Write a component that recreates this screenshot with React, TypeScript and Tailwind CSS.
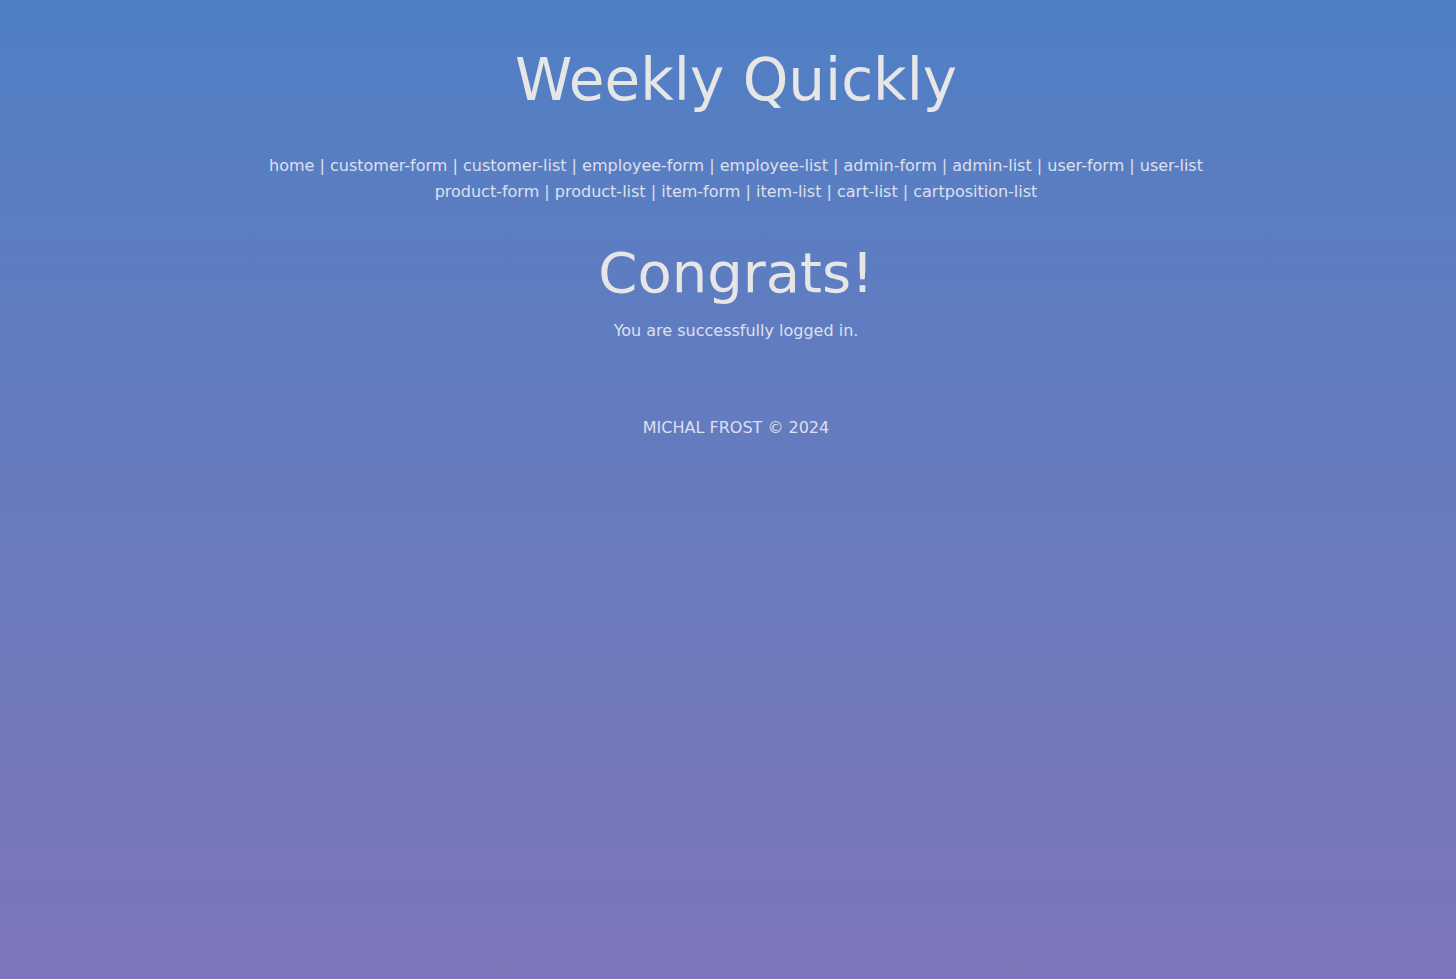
import React from "react";

const line1 = [
  "home",
  "customer-form",
  "customer-list",
  "employee-form",
  "employee-list",
  "admin-form",
  "admin-list",
  "user-form",
  "user-list",
];
const line2 = [
  "product-form",
  "product-list",
  "item-form",
  "item-list",
  "cart-list",
  "cartposition-list",
];

function NavLine({ items }: { items: string[] }) {
  return (
    <div className="whitespace-nowrap">
      {items.map((l, i) => (
        <React.Fragment key={l}>
          {i > 0 && " | "}
          <a href="#" className="text-[#dde0ee]">
            {l}
          </a>
        </React.Fragment>
      ))}
    </div>
  );
}

export default function App() {
  return (
    <div
      className="min-h-[979px] w-full bg-gradient-to-b from-[#4f7fc4] to-[#7c76b9] text-[#e6e6e6] flex flex-col items-center pl-[16px]"
      style={{ fontFamily: '"DejaVu Sans", sans-serif' }}
    >
      <h1 className="mt-[44px] text-[58px] leading-[72px] font-normal">
        Weekly Quickly
      </h1>
      <nav className="mt-[37px] flex flex-col items-center text-[16px] leading-[26px] text-[#dde0ee]">
        <NavLine items={line1} />
        <NavLine items={line2} />
      </nav>
      <h2 className="mt-[36px] text-[56px] leading-[64px] font-normal">Congrats!</h2>
      <p className="mt-[14px] text-[16px] leading-[24px] text-[#dde0ee]">
        You are successfully logged in.
      </p>
      <footer className="mt-[73px] text-[16px] leading-[24px] text-[#dde0ee]">
        MICHAL FROST © 2024
      </footer>
    </div>
  );
}
